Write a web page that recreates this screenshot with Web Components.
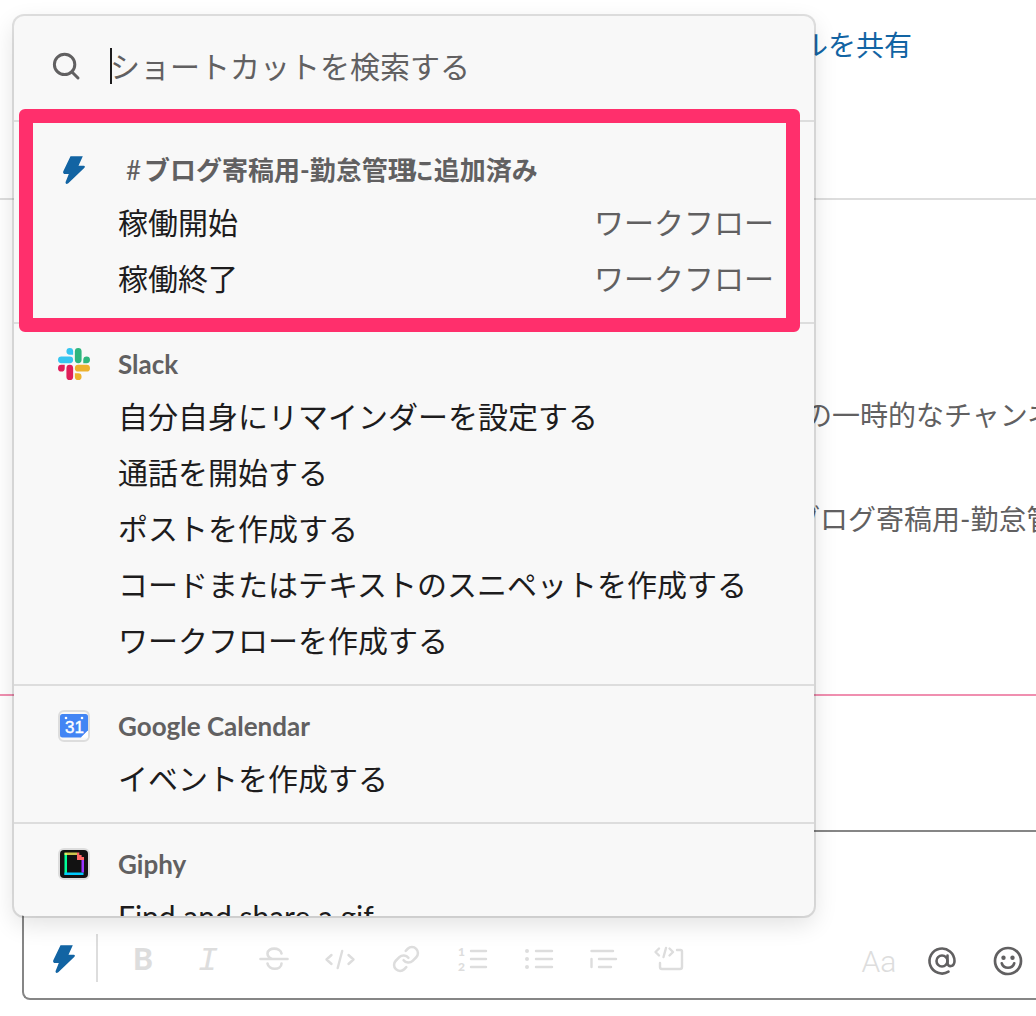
<!DOCTYPE html>
<html lang="ja">
<head>
<meta charset="utf-8">
<meta name="viewport" content="width=device-width, initial-scale=1">
<title>ショートカット</title>
<style>
  html, body { margin: 0; height: 100%; }
  body {
    background: #fff;
    color: #1d1c1d;
    font-family: Lato, "Noto Sans CJK JP", sans-serif;
    --line: #dddddd;
    --muted: #616061;
    --blue: #1264a3;
    --faint: #dddddd;
  }
</style>
</head>
<body>
<chat-page>
  <a slot="share" href="#share">ルを共有</a>
  <span slot="note">の一時的なチャンネル</span>
  <span slot="channel">ブログ寄稿用-勤怠管理</span>

  <shortcut-menu slot="menu">
    <shortcut-section pinned>
      <app-icon slot="icon" name="bolt"></app-icon>
      <channel-title slot="title"><span>ブログ寄稿用-勤怠管理</span><span slot="suffix">に追加済み</span></channel-title>
      <shortcut-item>稼働開始<span slot="kind">ワークフロー</span></shortcut-item>
      <shortcut-item>稼働終了<span slot="kind">ワークフロー</span></shortcut-item>
    </shortcut-section>
    <shortcut-section>
      <app-icon slot="icon" name="slack"></app-icon>
      <span slot="title">Slack</span>
      <shortcut-item>自分自身にリマインダーを設定する</shortcut-item>
      <shortcut-item>通話を開始する</shortcut-item>
      <shortcut-item>ポストを作成する</shortcut-item>
      <shortcut-item>コードまたはテキストのスニペットを作成する</shortcut-item>
      <shortcut-item>ワークフローを作成する</shortcut-item>
    </shortcut-section>
    <shortcut-section>
      <app-icon slot="icon" name="calendar"></app-icon>
      <span slot="title">Google Calendar</span>
      <shortcut-item>イベントを作成する</shortcut-item>
    </shortcut-section>
    <shortcut-section>
      <app-icon slot="icon" name="giphy"></app-icon>
      <span slot="title">Giphy</span>
      <shortcut-item>Find and share a gif</shortcut-item>
    </shortcut-section>
  </shortcut-menu>

  <message-composer slot="composer"></message-composer>
</chat-page>

<script>
const define = (name, html, setup) => {
  const template = document.createElement('template');
  template.innerHTML = html;
  customElements.define(name, class extends HTMLElement {
    constructor() {
      super();
      this.attachShadow({ mode: 'open' }).append(template.content.cloneNode(true));
    }
    connectedCallback() { if (setup) setup(this); }
  });
};

const line = 'fill="none" stroke="currentColor" stroke-linecap="round" stroke-linejoin="round"';
const ICONS = {
  bolt: `<path fill="currentColor" d="M12.500 2.200H24.800L20.500 11.700H25.700Q27.800 12.200 26.200 14L10.300 29.300Q7.600 31 7.500 28.300L10.800 19.900H6.200Q4.600 19.500 5.200 17.600z"/>`,
  search: `<g ${line} stroke-width="3"><circle cx="14.600" cy="14.400" r="10.200"/><path d="M22 22l6 6"/></g>`,
  slack: `<g transform="scale(1.33333)">
    <path fill="#e01e5a" d="M5.042 15.165a2.528 2.528 0 0 1-2.520 2.523A2.528 2.528 0 0 1 0 15.165a2.527 2.527 0 0 1 2.522-2.520h2.520v2.520zM6.313 15.165a2.527 2.527 0 0 1 2.521-2.520 2.527 2.527 0 0 1 2.521 2.520v6.313A2.528 2.528 0 0 1 8.834 24a2.528 2.528 0 0 1-2.521-2.522v-6.313z"/>
    <path fill="#36c5f0" d="M8.834 5.042a2.528 2.528 0 0 1-2.521-2.520A2.528 2.528 0 0 1 8.834 0a2.528 2.528 0 0 1 2.521 2.522v2.520H8.834zM8.834 6.313a2.528 2.528 0 0 1 2.521 2.521 2.528 2.528 0 0 1-2.521 2.521H2.522A2.528 2.528 0 0 1 0 8.834a2.528 2.528 0 0 1 2.522-2.521h6.312z"/>
    <path fill="#2eb67d" d="M18.956 8.834a2.528 2.528 0 0 1 2.522-2.521A2.528 2.528 0 0 1 24 8.834a2.528 2.528 0 0 1-2.522 2.521h-2.522V8.834zM17.688 8.834a2.528 2.528 0 0 1-2.523 2.521 2.527 2.527 0 0 1-2.520-2.521V2.522A2.527 2.527 0 0 1 15.165 0a2.528 2.528 0 0 1 2.523 2.522v6.312z"/>
    <path fill="#ecb22e" d="M15.165 18.956a2.528 2.528 0 0 1 2.523 2.522A2.528 2.528 0 0 1 15.165 24a2.527 2.527 0 0 1-2.520-2.522v-2.522h2.520zM15.165 17.688a2.527 2.527 0 0 1-2.520-2.523 2.526 2.526 0 0 1 2.520-2.520h6.313A2.527 2.527 0 0 1 24 15.165a2.528 2.528 0 0 1-2.522 2.523h-6.313z"/></g>`,
  calendar: `<rect x="1" y="1" width="30" height="30" rx="5" fill="#f8f8f8" stroke="#dddddd" stroke-width="2"/>
    <path fill="#4285f4" d="M4.500 4H27.500Q30 4 30 6.500V20.500L23 27.500H4.500Q2 27.500 2 25V6.500Q2 4 4.500 4z"/>
    <path fill="#fff" d="M30 20.500V27.500H23z"/><circle cx="8" cy="8" r="1.300" fill="#fff"/><circle cx="24" cy="8" r="1.300" fill="#fff"/>
    <text x="16.500" y="23" text-anchor="middle" font-family="Liberation Sans, sans-serif" font-size="17" fill="#fff" stroke="#fff" stroke-width=".4">31</text>`,
  giphy: `<rect x="0" y="0" width="32" height="32" rx="6" fill="#dddddd"/><rect x="2" y="2" width="28" height="28" rx="4" fill="#121212"/>
    <path fill="#00ff99" d="M6.500 5h2.500v22H6.500z"/><path fill="#fff35c" fill-opacity=".8" d="M6.500 4.500H19V7H6.500z"/>
    <path fill="#00ccff" d="M6.500 24.500H25.500V27H6.500z"/><path fill="#9933ff" d="M23.500 12H26V24.500H23.500z"/>
    <path fill="#ff6666" d="M19 4.500l2.300 0V7H23.600V9H26V12H19z"/>`,
  strike: `<g ${line} stroke-width="2.600"><path d="M2.500 16H29.500M23.500 10.500C22.500 4 9.500 4 9.500 10.500Q9.500 14 14 16M9.500 20.500C10.500 27.500 23.500 27.500 23.500 20.500"/></g>`,
  code: `<g ${line} stroke-width="2.400"><path d="M7.500 12L2.500 16.500 7.500 21M24.500 12L29.500 16.500 24.500 21M18.200 8L13.700 25"/></g>`,
  link: `<g transform="translate(1.600 1.600) scale(1.2)" ${line} stroke-width="2.100"><path d="M10 13a5 5 0 0 0 7.540.54l3-3a5 5 0 0 0-7.070-7.070l-1.720 1.710M14 11a5 5 0 0 0-7.540-.54l-3 3a5 5 0 0 0 7.070 7.070l1.710-1.710"/></g>`,
  ordered: `<g ${line} stroke-width="2.400"><path d="M15 8H30M15 16H30M15 24H30"/></g>
    <g fill="currentColor" font-family="Lato, sans-serif" font-weight="900" font-size="12"><text x="2" y="13">1</text><text x="2" y="28">2</text></g>`,
  bullets: `<g ${line} stroke-width="2.400"><path d="M14 8H30M14 16H30M14 24H30"/></g>
    <g fill="currentColor"><circle cx="5" cy="8" r="2"/><circle cx="5" cy="16" r="2"/><circle cx="5" cy="24" r="2"/></g>`,
  quote: `<g ${line} stroke-width="2.400"><path d="M3.500 8H25M11 16H28M11 24H23M3.500 16V24"/></g>`,
  block: `<g ${line} stroke-width="2.400"><path d="M5 5.500L1.500 9 5 12.500M12 5L9.500 14M15.500 5.500L19 9 15.500 12.500M23 7H26.500Q28 7 28 8.500V24Q28 26 26 26H8Q6 26 6 24V20"/></g>`,
  at: `<g ${line} stroke-width="2.600"><circle cx="16" cy="16" r="5.500"/><path d="M21.500 10.500V17.500C21.500 23 28.500 22 28.500 16A12.500 12.500 0 1 0 22.500 26.700"/></g>`,
  smile: `<g ${line} stroke-width="2.700"><circle cx="16" cy="16" r="13"/><path d="M9.800 18.300C11.500 24.200 20.500 24.200 22.200 18.300"/></g>
    <circle cx="11.500" cy="12.700" r="2.200" fill="currentColor"/><circle cx="20.500" cy="12.700" r="2.200" fill="currentColor"/>`
};

define('app-icon', `
  <style>
    :host { display: block; width: 32px; height: 32px; flex: none; }
    :host([name="bolt"]) { color: var(--blue); }
    svg { display: block; width: 100%; height: 100%; overflow: visible; }
  </style>
  <svg viewBox="0 0 32 32" aria-hidden="true"></svg>`,
  el => { el.shadowRoot.querySelector('svg').innerHTML = ICONS[el.getAttribute('name')] || ''; });

define('channel-title', `
  <style>
    :host { display: flex; padding-left: 8px; }
    .hash { font-weight: 400; margin-right: 3px; }
    /* The suffix tucks under the end of a long channel name. */
    .suffix { margin-left: -6px; }
  </style>
  <span class="hash">#</span><slot></slot><span class="suffix"><slot name="suffix"></slot></span>`);

define('shortcut-item', `
  <style>
    :host { display: block; }
    button {
      display: flex; justify-content: space-between; align-items: center;
      width: 100%; height: 56px; padding: 0 40px 0 104px; margin: 0;
      border: 0; background: none; color: inherit; text-align: left;
      font: inherit; font-size: 30px; line-height: 56px; white-space: nowrap; cursor: pointer;
    }
    .kind { color: var(--muted); }
  </style>
  <button type="button"><span><slot></slot></span><span class="kind"><slot name="kind"></slot></span></button>`);

define('shortcut-section', `
  <style>
    :host { display: block; position: relative; flex: none; padding: 16px 0; border-top: 2px solid var(--line); }
    :host([pinned]) { padding-top: 24px; z-index: 1; }
    header { display: flex; align-items: center; gap: 28px; height: 48px; padding-left: 44px; }
    h2 { margin: 0; font-size: 26px; line-height: 48px; font-weight: 700; color: var(--muted); white-space: nowrap; }
    .frame { display: none; }
    :host([pinned]) .frame {
      display: block; position: absolute; inset: -13px 14px -10px 5px;
      border: 14px solid #ff2f6c; border-radius: 6px; pointer-events: none;
    }
  </style>
  <header><slot name="icon"></slot><h2><slot name="title"></slot></h2></header>
  <slot></slot>
  <div class="frame"></div>`);

define('shortcut-menu', `
  <style>
    :host {
      display: flex; flex-direction: column; overflow: hidden;
      background: #f8f8f8; border-radius: 10px;
      box-shadow: 0 0 0 2px rgba(29,28,29,.13), 0 8px 24px rgba(0,0,0,.12);
    }
    .search { display: flex; align-items: center; flex: none; box-sizing: border-box; height: 104px; padding: 0 40px 4px 36px; }
    app-icon { color: var(--muted); margin-right: 28px; }
    .caret { width: 2px; height: 36px; margin-right: -2px; background: #1d1c1d; z-index: 1; }
    input {
      flex: 1; min-width: 0; height: 56px; padding: 0; border: 0; outline: 0;
      background: none; color: inherit; font: inherit; font-size: 30px;
    }
    input::placeholder { color: var(--muted); opacity: 1; }
  </style>
  <label class="search"><app-icon name="search"></app-icon><span class="caret"></span><input type="text" aria-label="ショートカットを検索する" placeholder="ショートカットを検索する"></label>
  <slot></slot>`);

define('message-composer', `
  <style>
    :host {
      display: flex; flex-direction: column; justify-content: flex-end; box-sizing: border-box;
      height: 170px; padding: 0 0 16px 12px; background: #fff;
      border: 2px solid #868686; border-right: 0; border-radius: 8px 0 0 8px;
    }
    .bar { display: flex; align-items: center; height: 48px; }
    button {
      display: flex; align-items: center; justify-content: center; flex: none; box-sizing: border-box;
      width: 56px; height: 48px; padding: 2px 0 0; border: 0; background: none;
      color: var(--faint); font: 400 30px/40px Lato, sans-serif; cursor: pointer;
    }
    .rule { width: 2px; height: 48px; margin-left: 4px; background: var(--line); }
    .format { display: flex; gap: 10px; margin-left: 16px; }
    .tools { display: flex; gap: 10px; margin-left: auto; padding-top: 4px; }
    .bold { font-weight: 900; padding: 0 0 0 2px; }
    .italic { font-family: "Liberation Mono", monospace; font-style: italic; font-size: 34px; padding-top: 6px; }
    .type { font-family: Roboto, sans-serif; font-weight: 300; padding: 4px 0 0 6px; }
    .dark { color: var(--muted); }
  </style>
  <div class="bar">
    <button type="button" aria-label="ショートカット"><app-icon name="bolt"></app-icon></button>
    <span class="rule"></span>
    <div class="format">
      <button type="button" class="bold">B</button>
      <button type="button" class="italic">I</button>
      <button type="button" aria-label="取り消し線"><app-icon name="strike"></app-icon></button>
      <button type="button" aria-label="コード"><app-icon name="code"></app-icon></button>
      <button type="button" aria-label="リンク"><app-icon name="link"></app-icon></button>
      <button type="button" aria-label="番号付きリスト"><app-icon name="ordered"></app-icon></button>
      <button type="button" aria-label="箇条書き"><app-icon name="bullets"></app-icon></button>
      <button type="button" aria-label="引用"><app-icon name="quote"></app-icon></button>
      <button type="button" aria-label="コードブロック"><app-icon name="block"></app-icon></button>
    </div>
    <div class="tools">
      <button type="button" class="type">Aa</button>
      <button type="button" class="dark" aria-label="メンション"><app-icon name="at"></app-icon></button>
      <button type="button" class="dark" aria-label="絵文字"><app-icon name="smile"></app-icon></button>
    </div>
  </div>`);

define('chat-page', `
  <style>
    :host {
      display: flex; flex-direction: column; position: relative; box-sizing: border-box;
      min-height: 100vh; overflow: hidden; padding-bottom: 16px;
      font-size: 28px; line-height: 40px; white-space: nowrap;
    }
    .top { height: 173px; padding: 25px 0 0 800px; border-bottom: 2px solid var(--line); }
    .log { flex: 1; display: flex; flex-direction: column; gap: 64px; padding: 195px 0 0 792px; color: var(--muted); }
    .note { padding-left: 12px; }
    .unread { height: 2px; margin-bottom: 134px; background: #f08fb0; }
    .compose { padding-left: 22px; }
    .menu { position: absolute; top: 16px; bottom: 100px; left: 14px; width: min(800px, calc(100% - 28px)); display: grid; }
    ::slotted(a) { color: var(--blue); text-decoration: none; }
    ::slotted(shortcut-menu) { min-height: 0; }
  </style>
  <div class="top"><slot name="share"></slot></div>
  <div class="log">
    <div class="note"><slot name="note"></slot></div>
    <div><slot name="channel"></slot></div>
  </div>
  <div class="unread"></div>
  <div class="compose"><slot name="composer"></slot></div>
  <div class="menu"><slot name="menu"></slot></div>`);
</script>
</body>
</html>
